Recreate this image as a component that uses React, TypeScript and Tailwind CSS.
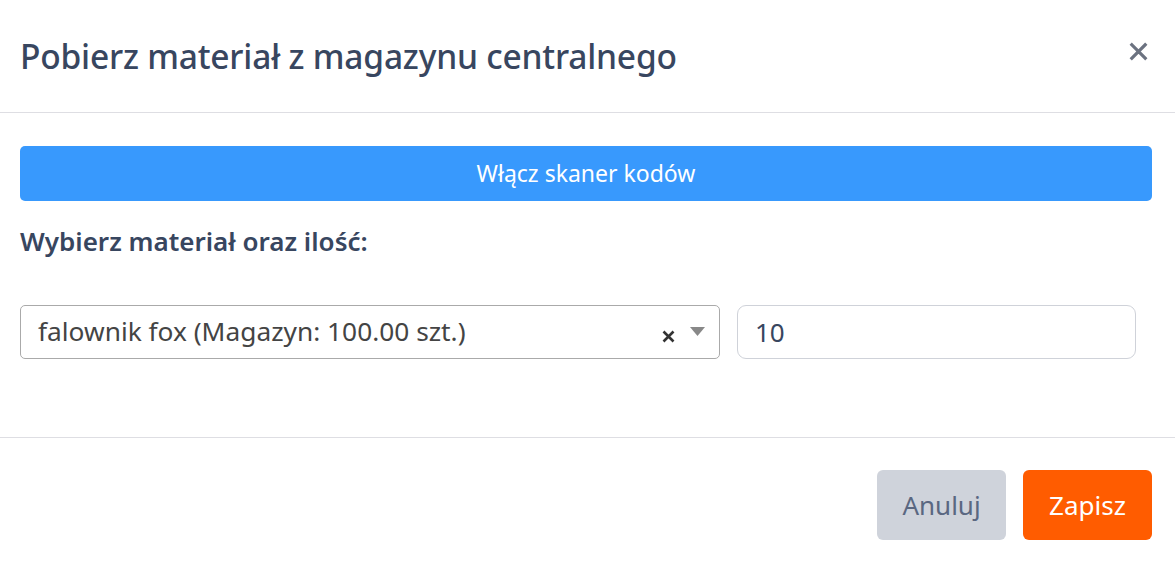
import React, { useState } from 'react';

const font = { fontFamily: '"Noto Sans", "Open Sans", sans-serif' };

const App: React.FC = () => {
  const [qty, setQty] = useState('10');

  return (
    <div className="w-[1175px] h-[566px] bg-white text-[#38465f]" style={font}>
      <div className="flex items-center justify-between h-[113px] pl-[20px] pr-[27px] border-b border-[#dedee3]">
        <h1 className="text-[33.5px] font-medium tracking-[-0.2px] leading-[40px]">Pobierz materiał z magazynu centralnego</h1>
        <button type="button" className="text-[#6b7280] mb-[10px]">
          <svg width="19" height="19" viewBox="0 0 20 20">
            <path d="M3 3 L17 17 M17 3 L3 17" stroke="currentColor" strokeWidth="3.4" strokeLinecap="square" />
          </svg>
        </button>
      </div>

      <div className="flex flex-col pl-[20px] pr-[23px] pt-[33px] h-[325px] border-b border-[#dedee3]">
        <button type="button" className="h-[55px] w-full rounded-[5px] bg-[#3899fd] text-white text-[23px]">
          Włącz skaner kodów
        </button>
        <div className="mt-[24px] text-[26px] leading-[33px] font-semibold">Wybierz materiał oraz ilość:</div>
        <div className="flex gap-[17px] mt-[47px]">
          <div className="flex items-center w-[700px] h-[54px] rounded-[5px] border border-[#aaa] pl-[17px] pr-[14px]">
            <span className="flex-1 text-[26.3px] text-[#444]">falownik fox (Magazyn: 100.00 szt.)</span>
            <svg width="13" height="13" viewBox="0 0 13 13" className="mr-[15px] mt-[8px]">
              <path d="M1.5 1.5 L11.5 11.5 M11.5 1.5 L1.5 11.5" stroke="#333" strokeWidth="2.6" />
            </svg>
            <svg width="15" height="9" viewBox="0 0 15 9" className="mb-[2px]">
              <path d="M0 0 H15 L7.5 9 Z" fill="#888" />
            </svg>
          </div>
          <input
            value={qty}
            onChange={(e) => setQty(e.target.value)}
            className="w-[399px] h-[54px] rounded-[9px] border border-[#cfd2d9] px-[17px] text-[26px] text-[#38465f] outline-none"
          />
        </div>
      </div>

      <div className="flex justify-end gap-[17px] pr-[23px] pt-[32px]">
        <button type="button" className="w-[129px] h-[70px] rounded-[6px] bg-[#cfd3db] text-[#5a6781] text-[26px]">
          Anuluj
        </button>
        <button type="button" className="w-[129px] h-[70px] rounded-[6px] bg-[#ff5c00] text-white text-[26px]">
          Zapisz
        </button>
      </div>
    </div>
  );
};

export default App;
